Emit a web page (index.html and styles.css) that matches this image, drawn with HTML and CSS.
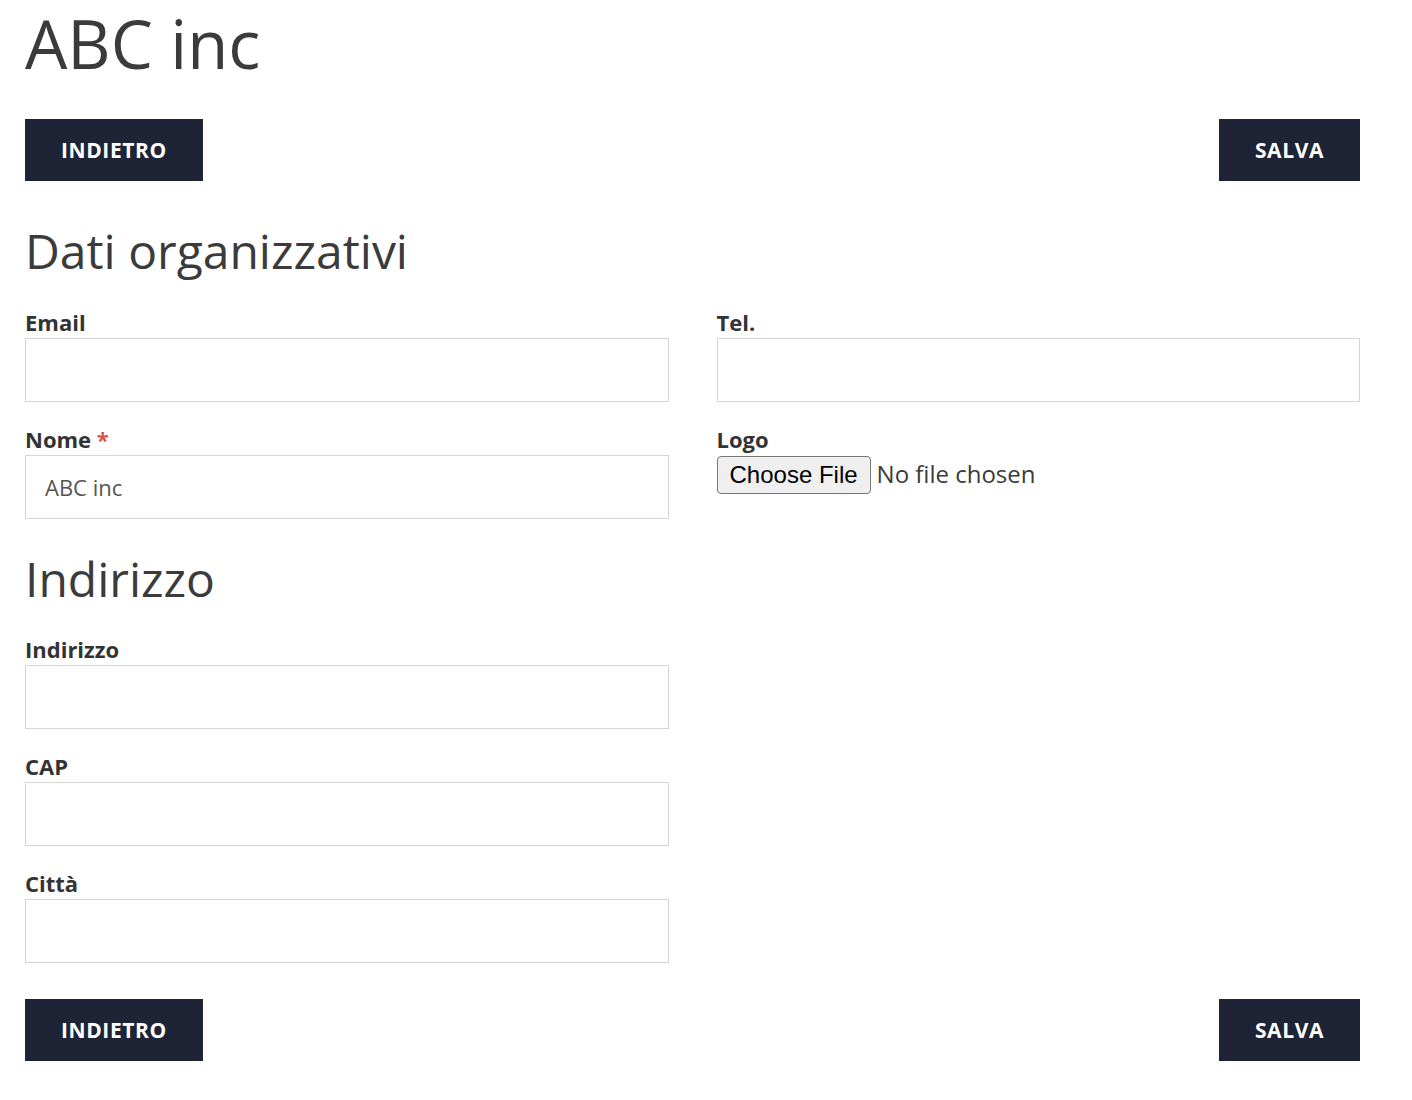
FILE: index.html
```html
<!DOCTYPE html>
<html lang="it">
<head>
<meta charset="utf-8">
<title>ABC inc</title>
<link rel="stylesheet" href="styles.css">
</head>
<body>
<div class="page">
  <h1 class="title">ABC inc</h1>
  <div class="actions actions-top">
    <button class="btn" type="button">Indietro</button>
    <button class="btn" type="button">Salva</button>
  </div>

  <h2 class="section-title">Dati organizzativi</h2>
  <div class="grid">
    <div class="col">
      <div class="field">
        <label class="label" for="email">Email</label>
        <input class="input" id="email" type="text">
      </div>
      <div class="field">
        <label class="label" for="nome">Nome <span class="req">*</span></label>
        <input class="input" id="nome" type="text" value="ABC inc">
      </div>
    </div>
    <div class="col">
      <div class="field">
        <label class="label" for="tel">Tel.</label>
        <input class="input" id="tel" type="text">
      </div>
      <div class="field">
        <label class="label" for="logo">Logo</label>
        <input class="file" id="logo" type="file">
      </div>
    </div>
  </div>

  <h2 class="section-title section-gap">Indirizzo</h2>
  <div class="grid">
    <div class="col">
      <div class="field">
        <label class="label" for="indirizzo">Indirizzo</label>
        <input class="input" id="indirizzo" type="text">
      </div>
      <div class="field">
        <label class="label" for="cap">CAP</label>
        <input class="input" id="cap" type="text">
      </div>
      <div class="field">
        <label class="label" for="citta">Città</label>
        <input class="input" id="citta" type="text">
      </div>
    </div>
    <div class="col"></div>
  </div>

  <div class="actions actions-bottom">
    <button class="btn" type="button">Indietro</button>
    <button class="btn" type="button">Salva</button>
  </div>
</div>
</body>
</html>
```

FILE: styles.css
```css
* { box-sizing: border-box; }

html, body {
  margin: 0;
  padding: 0;
  background: #ffffff;
}

body {
  font-family: "Open Sans", "Liberation Sans", Arial, sans-serif;
  color: #3b3b3b;
}

.page {
  width: 1335px;
  margin-left: 25px;
}

.title {
  margin: 0;
  padding-top: 10px;
  font-size: 67px;
  font-weight: 400;
  line-height: 67px;
  color: #3b3b3b;
}

.actions {
  display: flex;
  justify-content: space-between;
}

.actions-top {
  margin-top: 42px;
}

.actions-bottom {
  margin-top: 36px;
}

.btn {
  height: 62px;
  padding: 0 36px;
  border: none;
  border-radius: 0;
  background: #1e2335;
  color: #ffffff;
  font-family: "Open Sans", "Liberation Sans", Arial, sans-serif;
  font-size: 21px;
  font-weight: 700;
  letter-spacing: 0.6px;
  text-transform: uppercase;
  cursor: pointer;
}

.section-title {
  margin: 41px 0 30px;
  font-size: 48px;
  font-weight: 400;
  line-height: 57.6px;
  color: #3b3b3b;
}

.section-title.section-gap {
  margin-top: 31px;
}

.grid {
  display: grid;
  grid-template-columns: 1fr 1fr;
  column-gap: 48px;
}

.col {
  display: flex;
  flex-direction: column;
  gap: 25px;
}

.field {
  display: flex;
  flex-direction: column;
  align-items: flex-start;
}

.label {
  display: block;
  margin-bottom: 4px;
  font-size: 22px;
  font-weight: 700;
  line-height: 24px;
  color: #333333;
}

.req {
  color: #d9534f;
}

.input {
  width: 100%;
  height: 64px;
  padding: 0 19px;
  border: 1px solid #d5d5d5;
  border-radius: 0;
  background: #ffffff;
  font-family: "Open Sans", "Liberation Sans", Arial, sans-serif;
  font-size: 22px;
  color: #555555;
  outline: none;
}

.file {
  font-family: "Open Sans", "Liberation Sans", Arial, sans-serif;
  font-size: 24px;
  color: #3b3b3b;
  line-height: 38px;
}

.file::file-selector-button {
  height: 38px;
  margin-right: 6px;
  padding: 0 12px;
  border: 1px solid #767676;
  border-radius: 4px;
  background: #efefef;
  color: #000000;
  font-family: "Liberation Sans", Arial, sans-serif;
  font-size: 24px;
}
```
